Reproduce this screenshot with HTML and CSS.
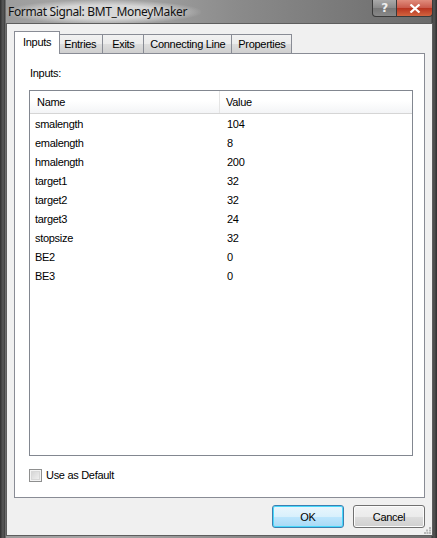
FILE: index.html
```html
<!DOCTYPE html>
<html lang="en">
<head>
    <meta charset="UTF-8">
    <title>Format Signal: BMT_MoneyMaker</title>
    <link rel="stylesheet" href="styles.css">
</head>
<body>
    <div class="window">
        <div class="titlebar">
            <span class="caption">Format Signal: BMT_MoneyMaker</span>
            <div class="caption-buttons">
                <span class="cap-btn help">?</span>
                <span class="cap-btn close">
                    <svg width="12" height="9" viewBox="0 0 12 9">
                        <path d="M1.5 0.5 L10.5 8.5 M10.5 0.5 L1.5 8.5" stroke="#fff" stroke-width="2.2"/>
                    </svg>
                </span>
            </div>
        </div>
        <div class="client">
            <ul class="tabs">
                <li class="tab active">Inputs</li>
                <li class="tab">Entries</li>
                <li class="tab">Exits</li>
                <li class="tab">Connecting Line</li>
                <li class="tab">Properties</li>
            </ul>
            <div class="panel">
                <div class="label">Inputs:</div>
                <div class="listview">
                    <div class="lv-header">
                        <span class="col-name">Name</span>
                        <span class="col-value">Value</span>
                    </div>
                    <div class="lv-row"><span>smalength</span><span>104</span></div>
                    <div class="lv-row"><span>emalength</span><span>8</span></div>
                    <div class="lv-row"><span>hmalength</span><span>200</span></div>
                    <div class="lv-row"><span>target1</span><span>32</span></div>
                    <div class="lv-row"><span>target2</span><span>32</span></div>
                    <div class="lv-row"><span>target3</span><span>24</span></div>
                    <div class="lv-row"><span>stopsize</span><span>32</span></div>
                    <div class="lv-row"><span>BE2</span><span>0</span></div>
                    <div class="lv-row"><span>BE3</span><span>0</span></div>
                </div>
                <label class="check">
                    <span class="box"></span>
                    Use as Default
                </label>
            </div>
            <div class="buttons">
                <button class="btn default">OK</button>
                <button class="btn">Cancel</button>
            </div>
            <svg class="grip" width="7" height="7" viewBox="0 0 7 7">
                <g fill="#b8b8b8">
                    <rect x="5" y="0" width="2" height="2"/>
                    <rect x="2" y="2.5" width="2" height="2"/>
                    <rect x="5" y="2.5" width="2" height="2"/>
                    <rect x="0" y="5" width="2" height="2"/>
                    <rect x="2.5" y="5" width="2" height="2"/>
                    <rect x="5" y="5" width="2" height="2"/>
                </g>
            </svg>
        </div>
    </div>
</body>
</html>
```

FILE: styles.css
```css
body {
    margin: 0;
    width: 437px;
    height: 538px;
    overflow: hidden;
    font-family: "Liberation Sans", Arial, sans-serif;
    font-size: 11px;
    letter-spacing: -0.3px;
    color: #000;
}
.window {
    width: 437px;
    height: 538px;
    box-sizing: border-box;
    padding: 0 4px 2px 6px;
    display: flex;
    flex-direction: column;
    background:
        linear-gradient(to right, #2e2e2e 0, #5a5a5a 3px, #3c3c3c 5px, transparent 6px, transparent 431px, #3c3c3c 432px, #555 434px, #2e2e2e 437px),
        linear-gradient(to right, #9c9c9c 0%, #a8a8a8 25%, #8a8a8a 55%, #6a6a6a 100%);
}
.titlebar {
    height: 23px;
    display: flex;
    justify-content: space-between;
    align-items: flex-start;
}
.caption {
    font-family: "Noto Sans", "DejaVu Sans", sans-serif;
    font-size: 12px;
    letter-spacing: -0.35px;
    line-height: 24px;
    padding-left: 2px;
    color: #111;
    background: radial-gradient(ellipse at center, rgba(220,220,220,0.9) 40%, rgba(220,220,220,0) 72%);
    padding-right: 14px;
}
.caption-buttons {
    display: flex;
    margin-right: 0;
}
.cap-btn {
    height: 17px;
    display: flex;
    align-items: center;
    justify-content: center;
    box-sizing: border-box;
    border: 1px solid #3a3a3a;
    border-top: none;
}
.help {
    width: 25px;
    border-radius: 0 0 0 4px;
    background: linear-gradient(#a9a9a9, #8a8a8a 50%, #777 51%, #888);
    color: #eee;
    font-weight: bold;
    font-size: 12px;
    font-family: "DejaVu Sans", sans-serif;
}
.close {
    width: 36px;
    border-left: none;
    border-radius: 0 0 4px 0;
    background: linear-gradient(#e08c7c, #c9594a 50%, #b8331f 51%, #d2643f);
}
.client {
    flex: 1;
    position: relative;
    border: 1px solid #5e5e5e;
    background: #f0f0f0;
    padding: 7px;
    display: flex;
    flex-direction: column;
}
.tabs {
    list-style: none;
    margin: 0;
    padding: 0 0 0 3px;
    display: flex;
    align-items: flex-end;
    height: 22px;
    position: relative;
    z-index: 1;
}
.tab {
    height: 19px;
    min-width: 42px;
    line-height: 18px;
    box-sizing: border-box;
    padding: 0 6px;
    text-align: center;
    border: 1px solid #898c95;
    border-bottom: none;
    margin-left: -1px;
    background: linear-gradient(#f2f2f2, #ebebeb 50%, #dddddd 51%, #cfcfcf);
}
.tab.active {
    height: 23px;
    line-height: 21px;
    margin: 0 -2px 0 -3px;
    padding: 0 8px;
    background: #fff;
    position: relative;
    top: 1px;
}
.panel {
    height: 445px;
    box-sizing: border-box;
    border: 1px solid #898c95;
    background: #fff;
    padding: 13px 0 0 14px;
}
.label {
    line-height: 13px;
    padding-left: 1px;
}
.listview {
    margin-top: 10px;
    width: 384px;
    height: 366px;
    box-sizing: border-box;
    border: 1px solid #828790;
}
.lv-header {
    display: grid;
    grid-template-columns: 190px 1fr;
    height: 22px;
    line-height: 22px;
    border-bottom: 1px solid #d5d5d5;
    background: linear-gradient(#fff 45%, #f3f4f6);
}
.col-name {
    padding-left: 7px;
    border-right: 1px solid #e5e5e5;
}
.col-value {
    padding-left: 6px;
}
.lv-header + .lv-row {
    margin-top: 1px;
}
.lv-row {
    display: grid;
    grid-template-columns: 190px 1fr;
    height: 19px;
    line-height: 19px;
}
.lv-row span:first-child {
    padding-left: 5px;
}
.lv-row span:last-child {
    padding-left: 7px;
}
.check {
    display: flex;
    align-items: center;
    gap: 4px;
    margin-top: 13px;
    line-height: 13px;
}
.box {
    width: 13px;
    height: 13px;
    box-sizing: border-box;
    border: 1px solid #8e8f8f;
    background: linear-gradient(135deg, #cfcfcf, #f6f6f6);
    box-shadow: inset 0 0 0 1px #f4f4f4, inset 0 0 0 2px #d8d8d8;
}
.buttons {
    margin-top: 7px;
    display: flex;
    justify-content: flex-end;
    gap: 9px;
}
.btn {
    width: 72px;
    height: 23px;
    font-family: "Liberation Sans", Arial, sans-serif;
    font-size: 11px;
    letter-spacing: -0.3px;
    border: 1px solid #707070;
    border-radius: 3px;
    background: linear-gradient(#f2f2f2, #ebebeb 50%, #dddddd 51%, #cfcfcf);
    box-shadow: inset 0 0 0 1px #fcfcfc;
    padding: 0;
}
.btn.default {
    border-color: #3c7fb1;
    background: linear-gradient(#eaf6fd, #d9f0fc 50%, #bee6fd 51%, #a7d9f5);
    box-shadow: inset 0 0 0 1px #48d8fb;
}
.grip {
    position: absolute;
    right: 1px;
    bottom: 1px;
}
```
